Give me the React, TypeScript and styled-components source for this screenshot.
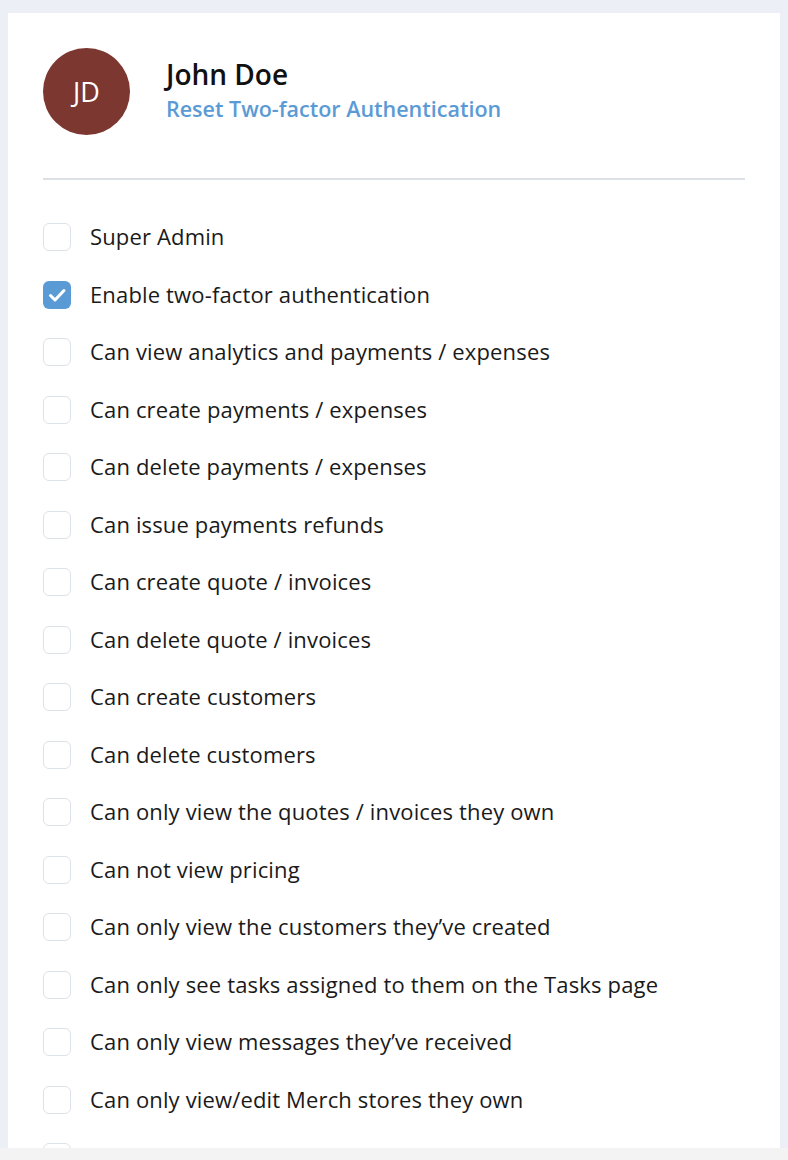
import React from "react";
import styled, { createGlobalStyle } from "styled-components";

const Global = createGlobalStyle`
  html, body { margin: 0; padding: 0; background: #f3f3f3; }
  body { font-family: "Open Sans", "Noto Sans", sans-serif; }
`;

const Page = styled.div`
  height: 1148px;
  background: #ecf0f6;
  padding: 13px 8px 0 8px;
  box-sizing: border-box;
  overflow: hidden;
`;

const Card = styled.div`
  background: #ffffff;
  padding: 35px 35px 0 35px;
  min-height: 100%;
`;

const Header = styled.div`
  display: flex;
  align-items: center;
  gap: 36px;
  padding-bottom: 43px;
  border-bottom: 2px solid #dde1e6;
`;

const Avatar = styled.div`
  width: 87px;
  height: 87px;
  border-radius: 50%;
  background: #7b3730;
  color: #ffffff;
  display: flex;
  align-items: center;
  justify-content: center;
  font-size: 27px;
  font-weight: 500;
  flex-shrink: 0;
`;

const Info = styled.div`
  display: flex;
  flex-direction: column;
  gap: 4px;
  margin-top: -3px;
`;

const Name = styled.div`
  font-size: 28px;
  line-height: 34px;
  font-weight: 600;
  color: #111111;
`;

const Link = styled.a`
  font-size: 21.5px;
  line-height: 28px;
  font-weight: 600;
  color: #5b9bd5;
  text-decoration: none;
  cursor: pointer;
`;

const List = styled.div`
  display: flex;
  flex-direction: column;
  padding-top: 43px;
  gap: 29.53px;
`;

const Row = styled.label`
  display: flex;
  align-items: center;
  gap: 19px;
  height: 28px;
  font-size: 22px;
  line-height: 28px;
  letter-spacing: 0.15px;
  color: #1a1a1a;
`;

const Box = styled.span<{ $checked: boolean }>`
  width: 28px;
  height: 28px;
  box-sizing: border-box;
  border-radius: 6px;
  border: ${(p) => (p.$checked ? "none" : "1.5px solid #dde1e8")};
  background: ${(p) => (p.$checked ? "#5b9bd5" : "#ffffff")};
  display: flex;
  align-items: center;
  justify-content: center;
  flex-shrink: 0;
`;

const Label = styled.span`
  margin-top: -2px;
`;

const items: [string, boolean][] = [
  ["Super Admin", false],
  ["Enable two-factor authentication", true],
  ["Can view analytics and payments / expenses", false],
  ["Can create payments / expenses", false],
  ["Can delete payments / expenses", false],
  ["Can issue payments refunds", false],
  ["Can create quote / invoices", false],
  ["Can delete quote / invoices", false],
  ["Can create customers", false],
  ["Can delete customers", false],
  ["Can only view the quotes / invoices they own", false],
  ["Can not view pricing", false],
  ["Can only view the customers they\u2019ve created", false],
  ["Can only see tasks assigned to them on the Tasks page", false],
  ["Can only view messages they\u2019ve received", false],
  ["Can only view/edit Merch stores they own", false],
  ["", false],
];

export default function App() {
  return (
    <>
      <Global />
      <Page>
        <Card>
          <Header>
            <Avatar>JD</Avatar>
            <Info>
              <Name>John Doe</Name>
              <Link>Reset Two-factor Authentication</Link>
            </Info>
          </Header>
          <List>
            {items.map(([label, checked], i) => (
              <Row key={i}>
                <Box $checked={checked}>
                  {checked && (
                    <svg width="28" height="28" viewBox="0 0 28 28">
                      <path
                        d="M7.5 14.5 L12 19 L21 9.5"
                        fill="none"
                        stroke="#ffffff"
                        strokeWidth="3"
                        strokeLinecap="round"
                        strokeLinejoin="round"
                      />
                    </svg>
                  )}
                </Box>
                {label && <Label>{label}</Label>}
              </Row>
            ))}
          </List>
        </Card>
      </Page>
    </>
  );
}
